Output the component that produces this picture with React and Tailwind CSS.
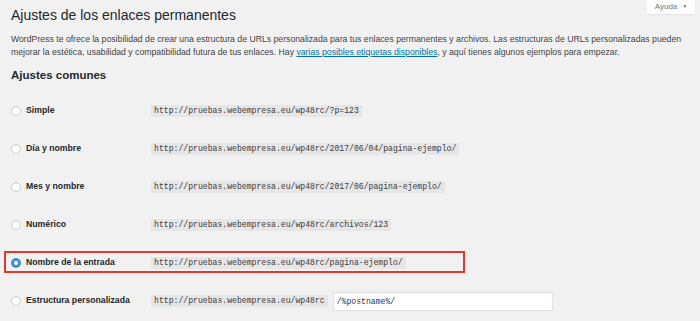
const rows = [
  { label: "Simple", code: "http://pruebas.webempresa.eu/wp48rc/?p=123" },
  { label: "Día y nombre", code: "http://pruebas.webempresa.eu/wp48rc/2017/06/04/pagina-ejemplo/" },
  { label: "Mes y nombre", code: "http://pruebas.webempresa.eu/wp48rc/2017/06/pagina-ejemplo/" },
  { label: "Numérico", code: "http://pruebas.webempresa.eu/wp48rc/archivos/123" },
  { label: "Nombre de la entrada", code: "http://pruebas.webempresa.eu/wp48rc/pagina-ejemplo/", checked: true },
];

const Radio = ({ checked }) =>
  checked ? (
    <span className="flex h-[10px] w-[10px] shrink-0 items-center justify-center rounded-full bg-[#3d8fe0]">
      <span className="h-[3.5px] w-[3.5px] rounded-full bg-white" />
    </span>
  ) : (
    <span className="h-[10px] w-[10px] shrink-0 rounded-full border border-[#cfcfcf] bg-white shadow-[inset_0_1px_1px_rgba(0,0,0,0.06)]" />
  );

const Code = ({ children }) => (
  <code className="bg-[#e6e6e6] px-[3px] py-[1px] font-['Liberation_Mono',monospace] text-[8.15px] leading-[10px] text-[#3c3c3c]">
    {children}
  </code>
);

const Label = ({ checked, children }) => (
  <div className="flex w-[140px] shrink-0 items-center gap-[5px]">
    <Radio checked={checked} />
    <span className="text-[8.7px] font-semibold text-[#23282d]">{children}</span>
  </div>
);

export default function App() {
  return (
    <div className="relative h-[321px] w-full overflow-hidden bg-[#f1f1f1] font-['Liberation_Sans',Arial,sans-serif]">
      <div className="absolute right-[5px] top-0 flex h-[14px] w-[48px] items-center justify-center gap-[5px] bg-white text-[8px] text-[#72777c] shadow-[0_1px_1px_rgba(0,0,0,0.05)]">
        <span>Ayuda</span>
        <span className="text-[5px]">▼</span>
      </div>

      <div className="px-[11px] pt-[6px]">
        <h1 className="text-[14px] leading-[18px] font-normal text-[#23282d]">
          Ajustes de los enlaces permanentes
        </h1>
        <p className="mt-[9px] text-[8.7px] leading-[13px] text-[#444]">
          WordPress te ofrece la posibilidad de crear una estructura de URLs personalizada para tus enlaces permanentes y archivos. Las estructuras de URLs personalizadas pueden
          <br />
          mejorar la estética, usabilidad y compatibilidad futura de tus enlaces. Hay{" "}
          <span className="text-[#0073aa] underline">varias posibles etiquetas disponibles</span>, y aquí tienes algunos ejemplos para empezar.
        </p>
        <h2 className="mt-[9px] text-[11.5px] leading-[14px] font-semibold text-[#23282d]">Ajustes comunes</h2>

        <div className="mt-[10px] flex flex-col">
          {rows.map((r) =>
            r.checked ? (
              <div key={r.label} className="flex h-[38px] items-center">
                <div className="-ml-[7px] mb-[2px] flex h-[22px] w-[461px] items-center border-2 border-[#e2392c] pl-[5px] pt-[2px]">
                  <Label checked>{r.label}</Label>
                  <Code>{r.code}</Code>
                </div>
              </div>
            ) : (
              <div key={r.label} className="flex h-[38px] items-center">
                <Label>{r.label}</Label>
                <Code>{r.code}</Code>
              </div>
            )
          )}
          <div className="flex h-[38px] items-center">
            <Label>Estructura personalizada</Label>
            <Code>http://pruebas.webempresa.eu/wp48rc</Code>
            <input
              readOnly
              value="/%postname%/"
              className="ml-[5px] h-[19px] w-[220px] border border-[#e2e2e2] bg-white px-[3px] font-['Liberation_Mono',monospace] text-[8.15px] text-[#32373c] shadow-[inset_0_1px_2px_rgba(0,0,0,0.05)] outline-none"
            />
          </div>
        </div>
      </div>
    </div>
  );
}
